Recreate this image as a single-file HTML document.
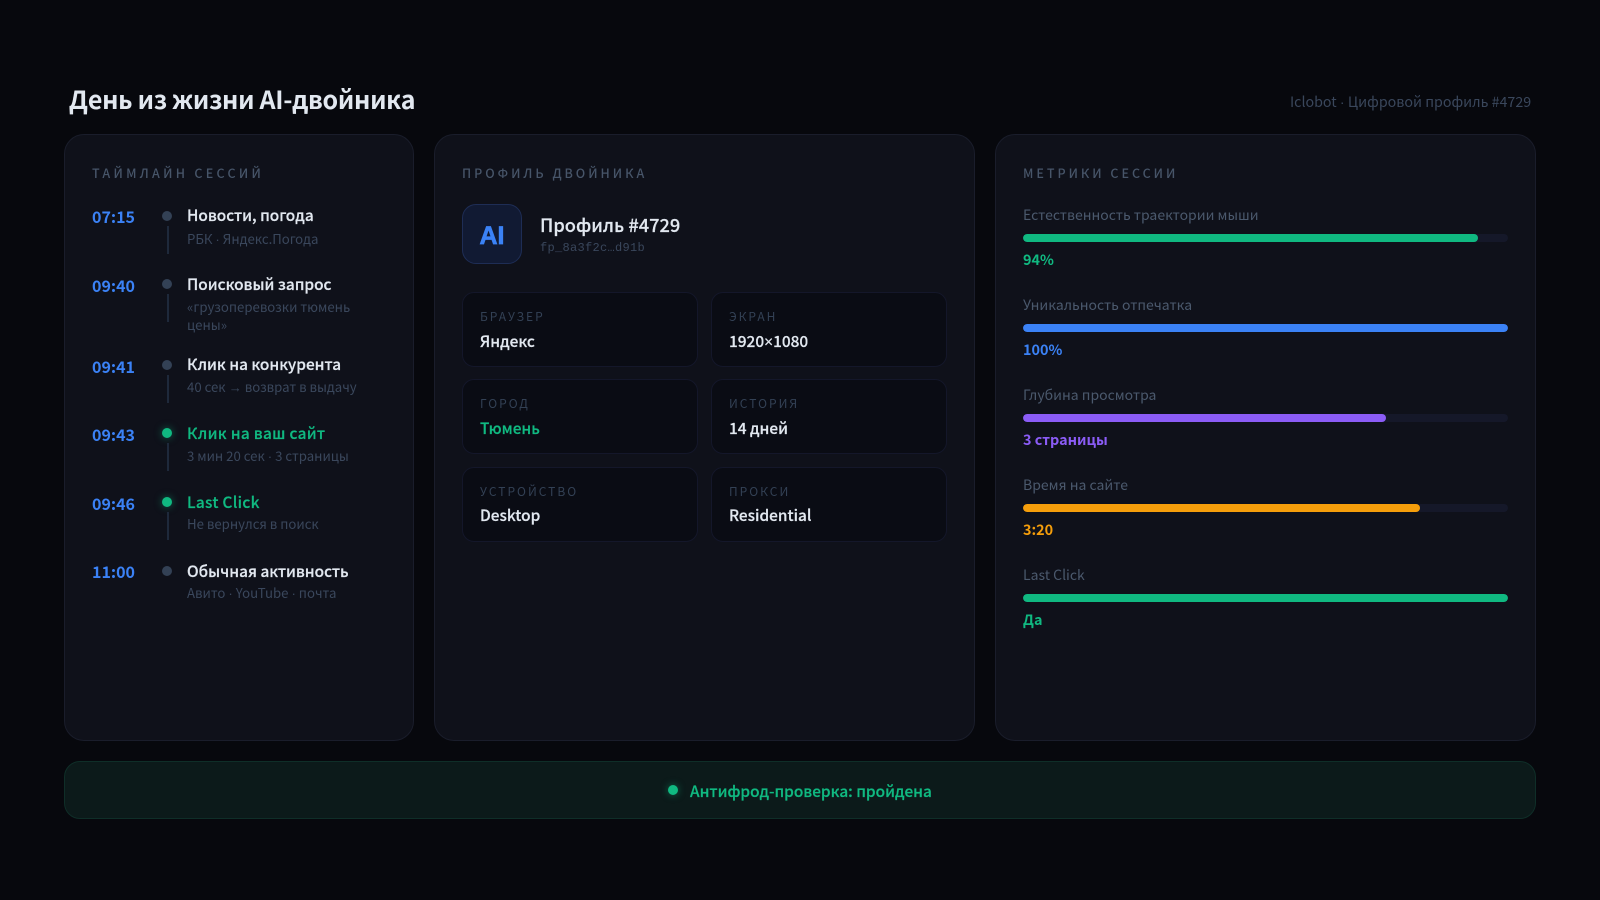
<!DOCTYPE html>
<html lang="ru"><head><meta charset="utf-8"><title>День из жизни AI-двойника</title>
<style>
*{box-sizing:border-box;margin:0;padding:0}
html,body{width:1600px;height:900px;overflow:hidden;background:#07080d}
body{position:relative;font-family:"Noto Sans CJK SC","Liberation Sans",sans-serif}
.t{position:absolute;white-space:nowrap;line-height:20px;height:20px}
.p{font-family:"Liberation Sans",sans-serif}
.c{position:absolute;background:#0f111a;border:1px solid #1a1d2b;border-radius:20px;top:134px;height:607px}
.h{font-size:12.5px;letter-spacing:3px;color:#475569;font-weight:500}
.tm{left:92px;font-size:16px;font-weight:700;color:#3b82f6}
.n{left:187px;font-size:15.4px;font-weight:500;color:#e2e8f0;-webkit-text-stroke:.2px currentColor}
.s{left:187px;font-size:13.2px;color:#3a475c}
.d{position:absolute;left:162px;width:10px;height:10px;border-radius:50%;background:#334155}
.d.on{background:#10b981;box-shadow:0 0 8px rgba(16,185,129,.5)}
.l{position:absolute;left:167px;width:1.5px;background:#1e293b;height:28px}
.b{position:absolute;width:235.5px;height:74.5px;background:#0a0c14;border:1px solid #14172a;border-radius:12px}
.bl{font-size:12px;letter-spacing:2px;color:#334155}
.bv{font-size:15.4px;font-weight:500;color:#e2e8f0;-webkit-text-stroke:.2px currentColor}
.ml{left:1023px;font-size:14px;color:#4b596d}
.mv{left:1023px;font-size:14.4px;font-weight:700}
.tr{position:absolute;left:1023px;width:484.5px;height:8px;border-radius:4px;background:#151829;overflow:hidden}
.tr i{display:block;height:8px;border-radius:4px}
.g{color:#10b981}
.n.g{letter-spacing:.3px}
</style></head><body>
<div class="t" style="left:69px;top:88px;line-height:22px;font-size:25px;font-weight:700;color:#e2e8f0;letter-spacing:-.3px">День из жизни AI-двойника</div>
<div class="t" style="left:1290px;top:92px;font-size:14.25px;color:#3a475c">Iclobot <span class="p">·</span> Цифровой профиль #4729</div>

<div class="c" style="left:64px;width:350px"></div>
<div class="c" style="left:434px;width:541px"></div>
<div class="c" style="left:995px;width:541px"></div>

<div class="t h" style="left:92px;top:163px;letter-spacing:3.3px">ТАЙМЛАЙН СЕССИЙ</div>
<div class="t tm" style="top:206px">07:15</div><div class="d" style="top:211px"></div><div class="l" style="top:226px"></div>
<div class="t n" style="top:205px">Новости, погода</div><div class="t s" style="top:229px">РБК <span class="p">·</span> Яндекс.Погода</div>
<div class="t tm" style="top:275px">09:40</div><div class="d" style="top:279px"></div><div class="l" style="top:294px"></div>
<div class="t n" style="top:274px">Поисковый запрос</div><div class="t s" style="top:297px">«грузоперевозки тюмень</div><div class="t s" style="top:315px">цены»</div>
<div class="t tm" style="top:356px">09:41</div><div class="d" style="top:360px"></div><div class="l" style="top:375px"></div>
<div class="t n" style="top:354px">Клик на конкурента</div><div class="t s" style="top:377px">40 сек <span class="p">→</span> возврат в выдачу</div>
<div class="t tm" style="top:424px">09:43</div><div class="d on" style="top:428px"></div><div class="l" style="top:443px"></div>
<div class="t n g" style="top:423px">Клик на ваш сайт</div><div class="t s" style="top:446px">3 мин 20 сек <span class="p">·</span> 3 страницы</div>
<div class="t tm" style="top:493px">09:46</div><div class="d on" style="top:497px"></div><div class="l" style="top:512px"></div>
<div class="t n g" style="top:492px">Last Click</div><div class="t s" style="top:514px">Не вернулся в поиск</div>
<div class="t tm" style="top:561px">11:00</div><div class="d" style="top:566px"></div>
<div class="t n" style="top:561px">Обычная активность</div><div class="t s" style="top:583px">Авито <span class="p">·</span> YouTube <span class="p">·</span> почта</div>

<div class="t h" style="left:462px;top:163px">ПРОФИЛЬ ДВОЙНИКА</div>
<div style="position:absolute;left:462px;top:204px;width:60px;height:60px;border-radius:14px;background:#111a33;border:1px solid #1e2d55"></div>
<div class="t" style="left:462px;width:60px;text-align:center;top:226px;font-size:25px;font-weight:900;font-family:'Liberation Sans',sans-serif;-webkit-text-stroke:.7px #3b82f6;color:#3b82f6">AI</div>
<div class="t" style="left:540px;top:215px;font-size:18.2px;font-weight:500;color:#e2e8f0;-webkit-text-stroke:.2px currentColor">Профиль #4729</div>
<div class="t" style="left:540px;top:238px;font-size:12px;font-family:'Liberation Mono',monospace;color:#3a475c;letter-spacing:.3px">fp_8a3f2c…d91b</div>

<div class="b" style="left:462px;top:292px"></div><div class="b" style="left:711px;top:292px"></div>
<div class="b" style="left:462px;top:379px"></div><div class="b" style="left:711px;top:379px"></div>
<div class="b" style="left:462px;top:467px"></div><div class="b" style="left:711px;top:467px"></div>
<div class="t bl" style="left:480px;top:307px">БРАУЗЕР</div><div class="t bv" style="left:480px;top:331px">Яндекс</div>
<div class="t bl" style="left:729px;top:307px">ЭКРАН</div><div class="t bv" style="left:729px;top:331px">1920<span class="p">×</span>1080</div>
<div class="t bl" style="left:480px;top:394px">ГОРОД</div><div class="t bv g" style="left:480px;top:418px">Тюмень</div>
<div class="t bl" style="left:729px;top:394px">ИСТОРИЯ</div><div class="t bv" style="left:729px;top:418px">14 дней</div>
<div class="t bl" style="left:480px;top:482px">УСТРОЙСТВО</div><div class="t bv" style="left:480px;top:505px">Desktop</div>
<div class="t bl" style="left:729px;top:482px">ПРОКСИ</div><div class="t bv" style="left:729px;top:505px">Residential</div>

<div class="t h" style="left:1023px;top:163px">МЕТРИКИ СЕССИИ</div>
<div class="t ml" style="top:205px">Естественность траектории мыши</div><div class="tr" style="top:234px"><i style="width:94%;background:#10b981"></i></div><div class="t mv" style="top:250px;color:#10b981">94%</div>
<div class="t ml" style="top:295px">Уникальность отпечатка</div><div class="tr" style="top:324px"><i style="width:100%;background:#3b82f6"></i></div><div class="t mv" style="top:340px;color:#3b82f6">100%</div>
<div class="t ml" style="top:385px">Глубина просмотра</div><div class="tr" style="top:414px"><i style="width:75%;background:#8b5cf6"></i></div><div class="t mv" style="top:430px;color:#8b5cf6">3 страницы</div>
<div class="t ml" style="top:475px">Время на сайте</div><div class="tr" style="top:504px"><i style="width:82%;background:#f59e0b"></i></div><div class="t mv" style="top:520px;color:#f59e0b">3:20</div>
<div class="t ml" style="top:565px">Last Click</div><div class="tr" style="top:594px"><i style="width:100%;background:#10b981"></i></div><div class="t mv" style="top:610px;color:#10b981">Да</div>

<div style="position:absolute;left:64px;top:761px;width:1472px;height:58px;border-radius:16px;background:#0c1a1a;border:1px solid #0f2e28"></div>
<div style="position:absolute;left:668px;top:785px;width:10px;height:10px;border-radius:50%;background:#10b981;box-shadow:0 0 8px rgba(16,185,129,.5)"></div>
<div class="t" style="left:690px;top:781px;font-size:15.4px;font-weight:500;color:#10b981;-webkit-text-stroke:.2px currentColor">Антифрод-проверка: пройдена</div>
</body></html>
